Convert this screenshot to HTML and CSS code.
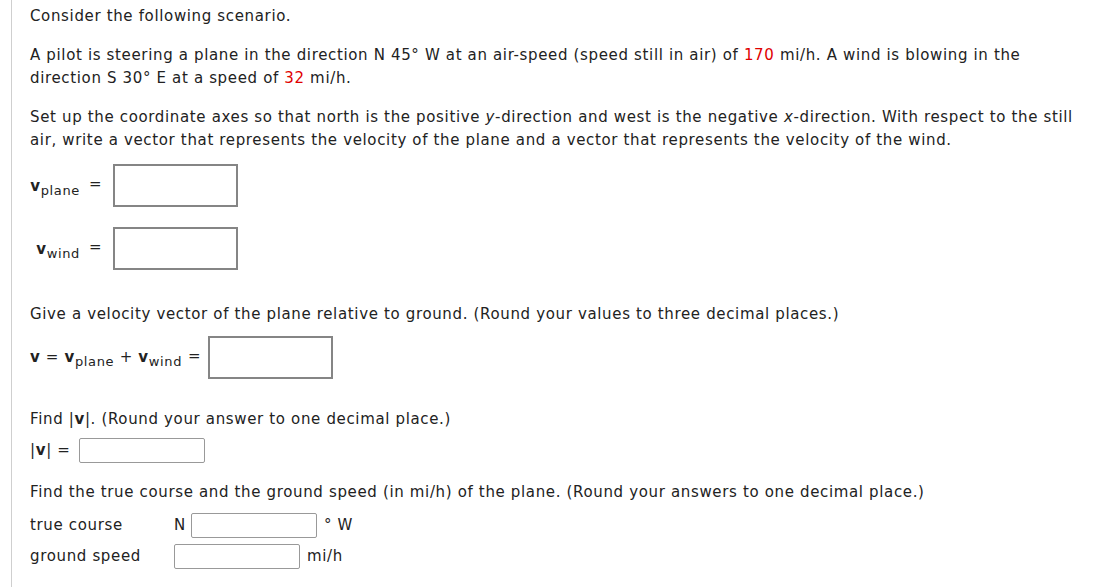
FILE: index.html
```html
<!DOCTYPE html>
<html>
<head>
<meta charset="utf-8">
<link rel="stylesheet" href="styles.css">
</head>
<body>
<div class="question">
  <p class="para first">Consider the following scenario.</p>
  <p class="para">A pilot is steering a plane in the direction N 45° W at an air-speed (speed still in air) of <span class="num">170</span> mi/h. A wind is blowing in the direction S 30° E at a speed of <span class="num">32</span> mi/h.</p>
  <p class="para">Set up the coordinate axes so that north is the positive <i>y</i>-direction and west is the negative <i>x</i>-direction. With respect to the still air, write a vector that represents the velocity of the plane and a vector that represents the velocity of the wind.</p>

  <div class="vec-table">
    <div class="vec-row">
      <span class="vlabel"><b>v</b><sub>plane</sub></span>
      <span class="eq">=</span>
      <span class="bigbox"></span>
    </div>
    <div class="vec-row">
      <span class="vlabel"><b>v</b><sub>wind</sub></span>
      <span class="eq">=</span>
      <span class="bigbox"></span>
    </div>
  </div>

  <p class="para give">Give a velocity vector of the plane relative to ground. (Round your values to three decimal places.)</p>

  <div class="sum-row">
    <span class="expr"><b>v</b> = <b>v</b><sub>plane</sub> + <b>v</b><sub>wind</sub></span>
    <span class="eq">=</span>
    <span class="bigbox"></span>
  </div>

  <p class="para find">Find |<b>v</b>|. (Round your answer to one decimal place.)</p>
  <div class="mag-row">
    <span>|<b>v</b>| =</span>
    <span class="smallbox"></span>
  </div>

  <p class="para course-q">Find the true course and the ground speed (in mi/h) of the plane. (Round your answers to one decimal place.)</p>
  <div class="ans-grid">
    <span class="ans-label">true course</span>
    <span class="ans-cell"><span class="dir">N</span><span class="smallbox"></span><span class="unit">° W</span></span>
    <span class="ans-label">ground speed</span>
    <span class="ans-cell"><span class="smallbox"></span><span class="unit">mi/h</span></span>
  </div>
</div>
</body>
</html>
```

FILE: styles.css
```css
html, body {
  margin: 0;
  padding: 0;
  background: #fff;
}
body {
  font-family: "DejaVu Sans", Verdana, sans-serif;
  font-size: 15px;
  line-height: 23px;
  letter-spacing: 0.65px;
  color: #222;
}
.question {
  margin-left: 11px;
  border-left: 1px solid #cfcfcf;
  padding: 5px 0 20px 18px;
  width: 1066px;
  min-height: 562px;
}
.para {
  margin: 0 0 16px 0;
}
.num {
  color: #e00000;
}
.vec-table {
  display: grid;
  grid-template-columns: auto;
  row-gap: 20px;
  margin-top: -4px;
}
.vec-row {
  display: flex;
  align-items: center;
}
.vlabel {
  width: 50px;
  text-align: right;
  margin-top: 2px;
  white-space: nowrap;
}
.vlabel b, .expr b {
  font-weight: bold;
}
sub {
  font-size: 13px;
  vertical-align: -4px;
  line-height: 0;
}
.eq {
  display: inline-block;
  margin: 0 11px 0 9px;
  position: relative;
  top: -1px;
}
.bigbox {
  display: inline-block;
  box-sizing: border-box;
  width: 125px;
  height: 43px;
  border: 2px solid #858585;
  background: #fff;
}
.give {
  margin-top: 33px;
  margin-bottom: 10px;
}
.sum-row {
  display: flex;
  align-items: center;
}
.expr {
  white-space: nowrap;
}
.sum-row .eq {
  margin: 0 7px 0 6px;
}
.find {
  margin-top: 29px;
  margin-bottom: 7px;
}
.mag-row {
  display: flex;
  align-items: center;
  gap: 8px;
}
.smallbox {
  display: inline-block;
  box-sizing: border-box;
  width: 126px;
  height: 25px;
  border: 1px solid #999;
  border-radius: 2px;
  background: #fff;
}
.course-q {
  margin-top: 18px;
  margin-bottom: 9px;
}
.ans-grid {
  display: grid;
  grid-template-columns: 144px auto;
  row-gap: 6px;
  align-items: center;
}
.ans-cell {
  display: flex;
  align-items: center;
}
.dir {
  margin-right: 5px;
}
.unit {
  margin-left: 7px;
}
```
